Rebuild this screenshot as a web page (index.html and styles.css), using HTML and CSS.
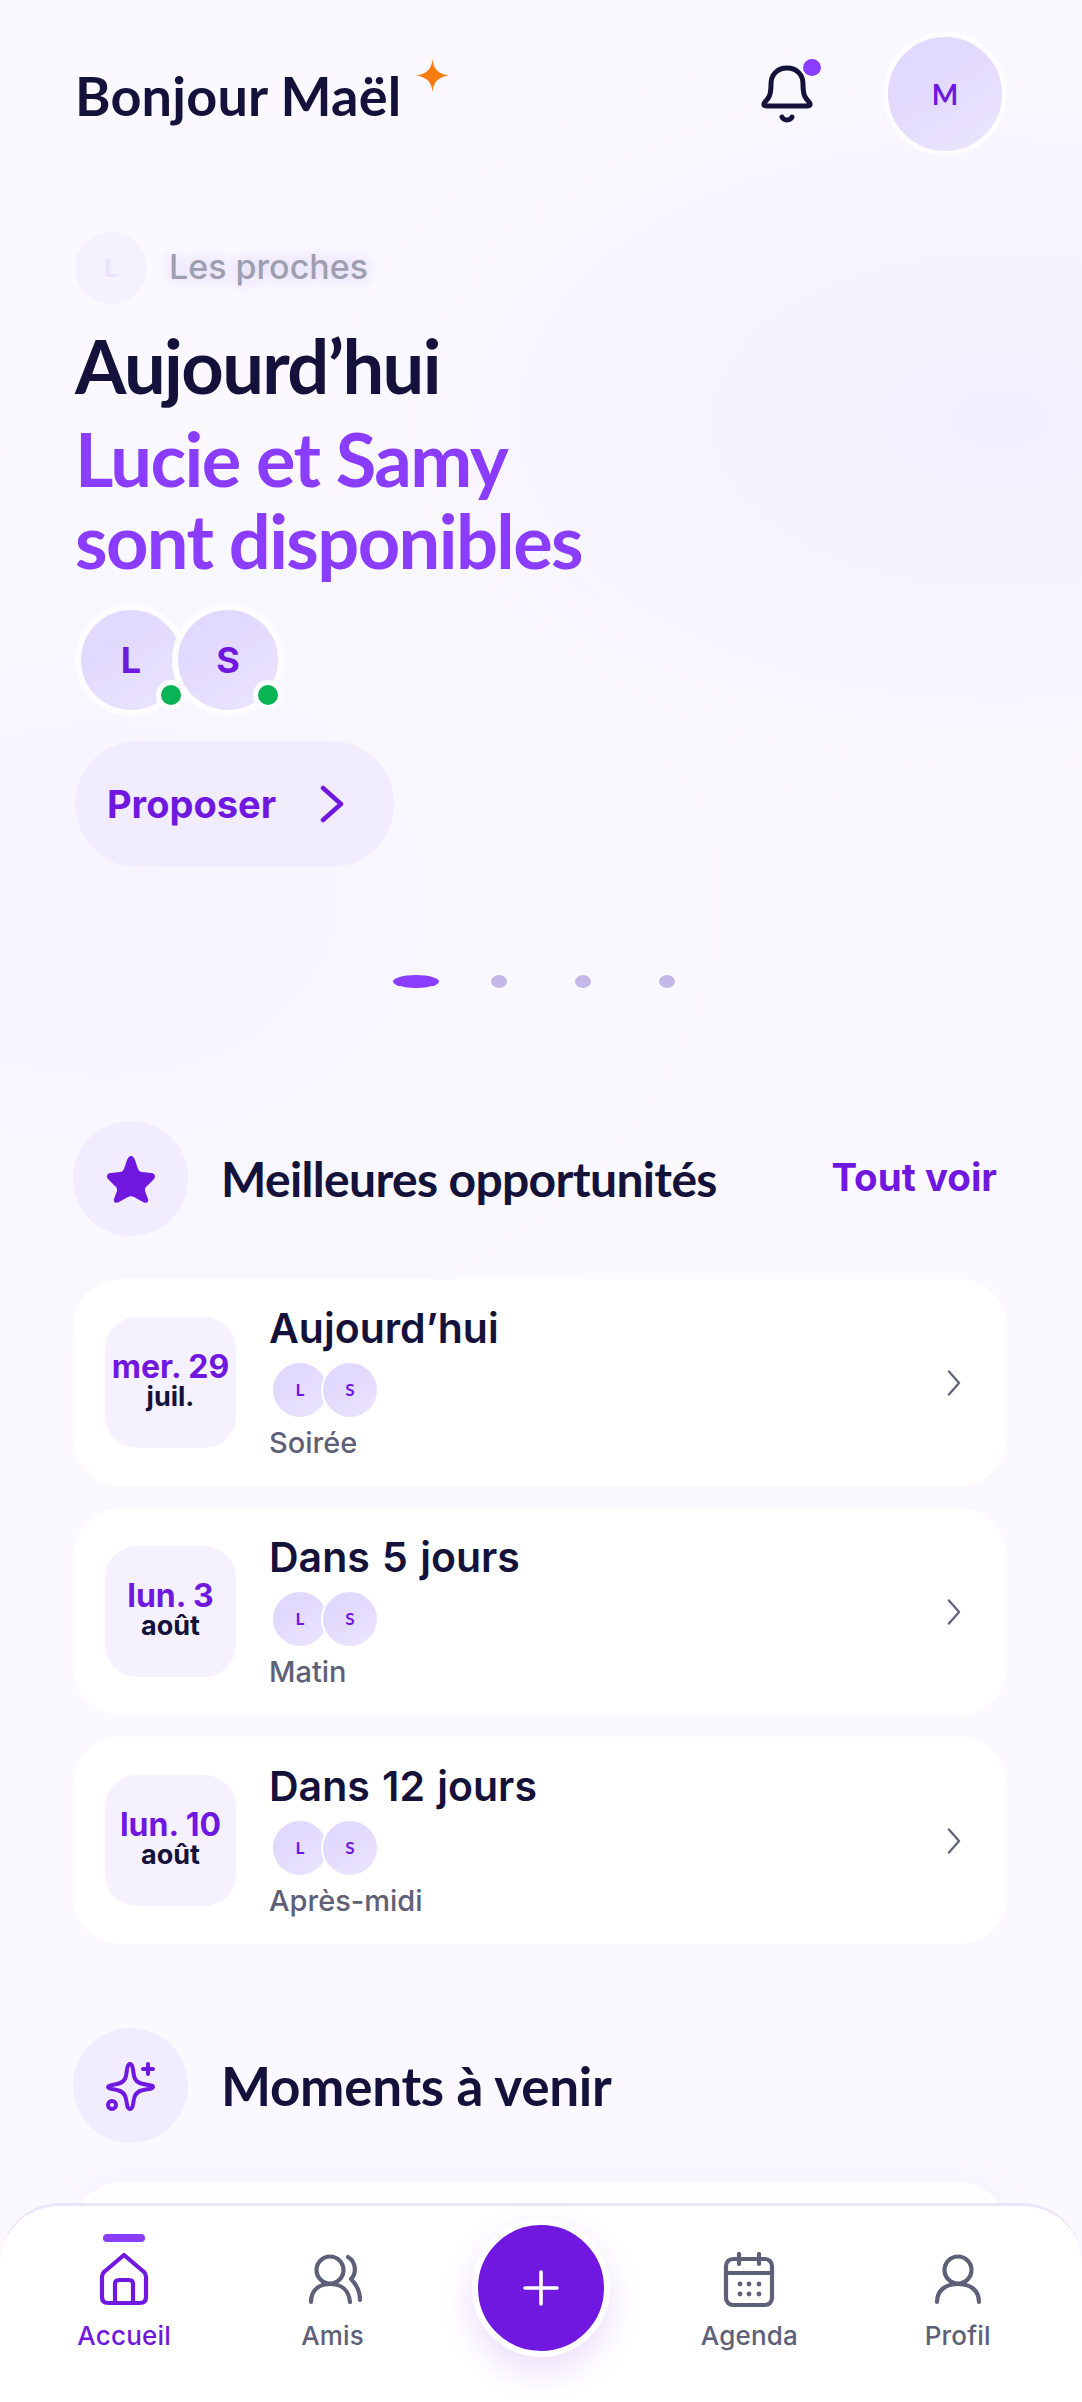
FILE: index.html
```html
<!DOCTYPE html>
<html lang="fr">

<head>
    <meta charset="utf-8">
    <title>Accueil</title>
    <link rel="stylesheet" href="styles.css">
</head>

<body>
    <div class="page">
        <header class="topbar">
            <h1 class="hello">Bonjour Maël</h1>
            <svg class="spark" viewBox="0 0 34 34"><path d="M17 0 C18 10 22 15 34 17 C22 19 18 24 17 34 C16 24 12 19 0 17 C12 15 16 10 17 0Z" fill="#f97c0f"/></svg>
            <div class="bell">
                <svg viewBox="0 0 52 58" fill="none" stroke="#14123a" stroke-width="5" stroke-linecap="round" stroke-linejoin="round">
                    <path d="M26 3 C16 3 10 10 10 19 C10 30 8 33 4 37 C2 40 3 41 6 41 H46 C49 41 50 40 48 37 C44 33 42 30 42 19 C42 10 36 3 26 3Z"/>
                    <path d="M21 52 C23 56 29 56 31 52"/>
                </svg>
                <span class="bell-dot"></span>
            </div>
            <div class="avatar avatar-big">M</div>
        </header>

        <section class="hero">
            <div class="hero-tag">
                <div class="tag-avatar">L</div>
                <span class="tag-text">Les proches</span>
            </div>
            <h2 class="hero-title">Aujourd’hui</h2>
            <p class="hero-sub">Lucie et Samy<br>sont disponibles</p>
            <div class="hero-people">
                <div class="avatar avatar-mid">L<span class="online"></span></div>
                <div class="avatar avatar-mid">S<span class="online"></span></div>
            </div>
            <a class="propose">
                Proposer
                <svg viewBox="0 0 24 38" fill="none" stroke="#7018e0" stroke-width="4.5" stroke-linecap="round" stroke-linejoin="round"><path d="M3 3 L21 19 L3 35"/></svg>
            </a>
            <div class="dots">
                <span class="dot dot-on"></span>
                <span class="dot"></span>
                <span class="dot"></span>
                <span class="dot"></span>
            </div>
        </section>

        <section class="best">
            <div class="sec-head">
                <div class="sec-icon">
                    <svg class="star" viewBox="0 0 50 48"><path d="M25 1 C27 1 28 3 29 5 L32 14 C33 16 34 17 36 17 L45 18 C49 18 50 22 48 24 L41 31 C39 32 39 34 39 36 L42 44 C43 47 40 49 37 47 L28 42 C26 41 24 41 22 42 L13 47 C10 49 7 47 8 44 L11 36 C11 34 11 32 9 31 L2 24 C0 22 1 18 5 18 L14 17 C16 17 17 16 18 14 L21 5 C22 3 23 1 25 1Z" fill="#7018e0"/></svg>
                </div>
                <h3 class="sec-title">Meilleures opportunités</h3>
                <a class="see-all">Tout voir</a>
            </div>

            <div class="cards">
                <div class="card">
                    <div class="date"><b>mer. 29</b><span>juil.</span></div>
                    <div class="card-body">
                        <h4>Aujourd’hui</h4>
                        <div class="minis"><div class="avatar avatar-mini">L</div><div class="avatar avatar-mini">S</div></div>
                        <p>Soirée</p>
                    </div>
                    <svg class="chev" viewBox="0 0 18 36" fill="none" stroke="#62647c" stroke-width="3.2" stroke-linecap="round" stroke-linejoin="round"><path d="M2 2 L16 18 L2 34"/></svg>
                </div>
                <div class="card">
                    <div class="date"><b>lun. 3</b><span>août</span></div>
                    <div class="card-body">
                        <h4>Dans 5 jours</h4>
                        <div class="minis"><div class="avatar avatar-mini">L</div><div class="avatar avatar-mini">S</div></div>
                        <p>Matin</p>
                    </div>
                    <svg class="chev" viewBox="0 0 18 36" fill="none" stroke="#62647c" stroke-width="3.2" stroke-linecap="round" stroke-linejoin="round"><path d="M2 2 L16 18 L2 34"/></svg>
                </div>
                <div class="card">
                    <div class="date"><b>lun. 10</b><span>août</span></div>
                    <div class="card-body">
                        <h4>Dans 12 jours</h4>
                        <div class="minis"><div class="avatar avatar-mini">L</div><div class="avatar avatar-mini">S</div></div>
                        <p>Après-midi</p>
                    </div>
                    <svg class="chev" viewBox="0 0 18 36" fill="none" stroke="#62647c" stroke-width="3.2" stroke-linecap="round" stroke-linejoin="round"><path d="M2 2 L16 18 L2 34"/></svg>
                </div>
            </div>
        </section>

        <section class="moments">
            <div class="sec-head">
                <div class="sec-icon">
                    <svg class="sparkle" viewBox="0 0 50 50" fill="none" stroke="#7018e0" stroke-width="4" stroke-linecap="round" stroke-linejoin="round">
                        <path d="M24 3 C27 3 27 10 28 15 C29 20 32 22 37 23 C41 24 47 24 47 26 C47 28 41 28 37 29 C32 30 29 33 28 38 C27 42 27 48 24 48 C21 48 21 42 20 38 C19 33 16 30 11 29 C7 28 2 28 2 26 C2 24 7 24 11 23 C16 22 19 20 20 15 C21 10 21 3 24 3Z"/>
                        <path d="M42 3 V13 M37 8 H47"/>
                        <circle cx="6" cy="44" r="4"/>
                    </svg>
                </div>
                <h3 class="sec-title sec-title-big">Moments à venir</h3>
            </div>
            <div class="peek"></div>
        </section>

        <nav class="tabbar">
            <a class="tab tab-on">
                <span class="tab-mark"></span>
                <svg class="tab-icon" viewBox="0 0 60 56" fill="none" stroke="#7018e0" stroke-width="4.2" stroke-linecap="round" stroke-linejoin="round">
                    <path d="M30 3 L10 20 Q8 22 8 25 V45 Q8 51 14 51 H46 Q52 51 52 45 V25 Q52 22 50 20 Z"/>
                    <path d="M21 51 V32 Q21 28 25 28 H35 Q39 28 39 32 V51"/>
                </svg>
                Accueil
            </a>
            <a class="tab">
                <span class="tab-mark"></span>
                <svg class="tab-icon" viewBox="0 0 60 56" fill="none" stroke="#5e6078" stroke-width="4.2" stroke-linecap="round" stroke-linejoin="round">
                    <circle cx="27" cy="18" r="13.5"/>
                    <path d="M8 50 C8 38 16 32 27 32 C38 32 46 38 47 50"/>
                    <path d="M45 5 C53 10 54 21 48 27 C54 33 57 39 57 48"/>
                </svg>
                Amis
            </a>
            <div class="tab-mid">
                <a class="fab">
                    <svg viewBox="0 0 36 36" fill="none" stroke="#fff" stroke-width="3.6" stroke-linecap="round"><path d="M18 2 V34 M2 18 H34"/></svg>
                </a>
            </div>
            <a class="tab">
                <span class="tab-mark"></span>
                <svg class="tab-icon" viewBox="0 0 60 56" fill="none" stroke="#5e6078" stroke-width="4.2" stroke-linecap="round" stroke-linejoin="round">
                    <rect x="7" y="7" width="46" height="46" rx="7"/>
                    <path d="M7 21 H53 M20 2 V12 M40 2 V12"/>
                    <g fill="#5e6078" stroke="none">
                        <circle cx="21" cy="32" r="2.4"/><circle cx="30" cy="32" r="2.4"/><circle cx="40" cy="32" r="2.4"/>
                        <circle cx="21" cy="42" r="2.4"/><circle cx="30" cy="42" r="2.4"/><circle cx="40" cy="42" r="2.4"/>
                    </g>
                </svg>
                Agenda
            </a>
            <a class="tab">
                <span class="tab-mark"></span>
                <svg class="tab-icon" viewBox="0 0 60 56" fill="none" stroke="#5e6078" stroke-width="4.2" stroke-linecap="round" stroke-linejoin="round">
                    <circle cx="30" cy="18" r="13.5"/>
                    <path d="M9 50 C9 38 18 32 30 32 C42 32 51 38 51 50"/>
                </svg>
                Profil
            </a>
        </nav>
    </div>
</body>

</html>
```

FILE: styles.css
```css
* {
    box-sizing: border-box;
}

html,
body {
    margin: 0;
    padding: 0;
}

.page {
    position: relative;
    width: 1082px;
    height: 2402px;
    overflow: hidden;
    font-family: "Inter", "Liberation Sans", sans-serif;
    color: #14123a;
    background-color: #fbf9ff;
    background-image:
        radial-gradient(ellipse 720px 420px at 1000px 420px, #f3efff 0%, rgba(243, 239, 255, 0) 100%),
        radial-gradient(ellipse 700px 520px at 100px 900px, #f6f5ff 0%, rgba(246, 245, 255, 0) 100%);
}

h1,
h2,
h3,
h4,
p {
    margin: 0;
}

/* top */
.topbar {
    display: flex;
    align-items: center;
    height: 124px;
    margin-top: 32px;
    padding: 0 75px;
}

.hello {
    font-family: "Lato", sans-serif;
    font-size: 54px;
    font-weight: 700;
    letter-spacing: 0.2px;
    margin-top: 2px;
}

.spark {
    width: 33px;
    height: 33px;
    margin: -38px 0 0 15px;
}

.bell {
    position: relative;
    width: 52px;
    height: 58px;
    margin-left: auto;
    margin-right: 70px;
}

.bell svg {
    display: block;
    width: 52px;
    height: 58px;
}

.bell-dot {
    position: absolute;
    top: -6px;
    right: -8px;
    width: 18px;
    height: 17px;
    border-radius: 50%;
    background: #8b3dff;
}

.avatar {
    position: relative;
    display: flex;
    align-items: center;
    justify-content: center;
    flex-shrink: 0;
    border-radius: 50%;
    color: #7018e0;
    font-weight: 700;
    background: linear-gradient(145deg, #e2d9ff 35%, #ece6fd 100%);
}

.avatar-big {
    width: 124px;
    height: 124px;
    border: 5px solid #fdfcff;
    font-family: "Lato", sans-serif;
    font-size: 28px;
}

/* hero */
.hero {
    padding: 0 75px;
    margin-top: 76px;
}

.hero-tag {
    display: flex;
    align-items: center;
    gap: 22px;
    height: 72px;
}

.tag-avatar {
    display: flex;
    align-items: center;
    justify-content: center;
    width: 72px;
    height: 72px;
    border-radius: 50%;
    background: #f5f2ff;
    color: #e9e3fd;
    font-size: 24px;
    font-weight: 700;
}

.tag-text {
    font-size: 34px;
    font-weight: 500;
    color: #9e9eb1;
    margin-top: -3px;
    text-shadow: 0 0 14px #dcd4f8, 0 0 22px #e3dcfb;
}

.hero-title,
.hero-sub {
    font-family: "Lato", sans-serif;
    font-size: 74px;
    font-weight: 700;
    line-height: 82px;
    letter-spacing: -1.6px;
}

.hero-title {
    margin-top: 21px;
}

.hero-sub {
    margin-top: 11px;
    color: #8b3dff;
}

.hero-people {
    display: flex;
    margin-top: 22px;
}

.avatar-mid {
    width: 112px;
    height: 112px;
    border: 6px solid #fdfcff;
    font-size: 36px;
}

.avatar-mid + .avatar-mid {
    margin-left: -15px;
}

.online {
    position: absolute;
    right: -5px;
    bottom: 0;
    width: 30px;
    height: 30px;
    border: 5px solid #fdfcff;
    border-radius: 50%;
    background: #08b454;
}

.propose {
    display: flex;
    align-items: center;
    justify-content: space-between;
    width: 319px;
    height: 126px;
    margin-top: 25px;
    padding: 0 50px 0 32px;
    border-radius: 63px;
    background: #f1ecfe;
    color: #7018e0;
    font-size: 38px;
    font-weight: 700;
}

.propose svg {
    width: 24px;
    height: 38px;
}

.dots {
    display: flex;
    align-items: center;
    width: 100%;
    margin-top: 108px;
    padding-left: 318px;
}

.dot {
    width: 16px;
    height: 13px;
    margin-left: 68px;
    border-radius: 50%;
    background: #c4b8e8;
}

.dot-on {
    width: 46px;
    height: 13px;
    margin-left: 0;
    margin-right: -16px;
    background: #8b3dff;
}

/* sections */
.best {
    padding: 0 85px 0 73px;
    margin-top: 133px;
}

.sec-head {
    display: flex;
    align-items: center;
}

.sec-icon {
    display: flex;
    align-items: center;
    justify-content: center;
    width: 115px;
    height: 115px;
    border-radius: 50%;
    background: #f1ecfe;
}

.star {
    width: 50px;
    height: 48px;
}

.sparkle {
    width: 50px;
    height: 50px;
}

.sec-title {
    margin-left: 33px;
    font-family: "Lato", sans-serif;
    font-size: 48px;
    font-weight: 700;
    letter-spacing: -0.65px;
}

.sec-title-big {
    font-size: 53px;
    letter-spacing: -0.3px;
}

.see-all {
    margin-left: auto;
    font-size: 38.5px;
    font-weight: 700;
    color: #7018e0;
    margin-top: -4px;
}

.cards {
    display: flex;
    flex-direction: column;
    gap: 22px;
    margin-top: 43px;
}

.card {
    display: flex;
    align-items: center;
    width: 934px;
    height: 207px;
    padding: 0 46px 0 32px;
    border-radius: 48px;
    background: #fff;
}

.date {
    display: flex;
    flex-direction: column;
    align-items: center;
    justify-content: center;
    width: 131px;
    height: 131px;
    padding-bottom: 5px;
    border-radius: 32px;
    background: #f5f1ff;
}

.date b {
    font-size: 32px;
    line-height: 33px;
    font-weight: 700;
    color: #7018e0;
}

.date span {
    font-size: 27px;
    line-height: 28px;
    font-weight: 700;
}

.card-body {
    margin: 5px 0 0 33px;
}

.card-body h4 {
    font-size: 41px;
    line-height: 36px;
    font-weight: 600;
    word-spacing: 2px;
}

.minis {
    display: flex;
    margin: 15px 0 6px 2px;
}

.avatar-mini {
    width: 58px;
    height: 58px;
    font-size: 17px;
    font-family: "Lato", sans-serif;
    border: 2px solid #fff;
}

.avatar-mini + .avatar-mini {
    margin-left: -8px;
}

.card-body p {
    font-size: 29px;
    line-height: 36px;
    font-weight: 500;
    color: #5f6078;
}

.chev {
    width: 14px;
    height: 26px;
    margin-left: auto;
}

.moments {
    padding: 0 75px 0 73px;
    margin-top: 84px;
}

.peek {
    width: 934px;
    height: 220px;
    margin-top: 39px;
    border-radius: 48px;
    background: rgba(255, 255, 255, 0.6);
    box-shadow: 0 -4px 30px rgba(139, 61, 255, 0.05);
}

/* bottom bar */
.tabbar {
    position: absolute;
    left: 0;
    right: 0;
    bottom: 0;
    display: grid;
    grid-template-columns: repeat(5, 1fr);
    height: 199px;
    padding: 28px 20px 0;
    background: rgba(255, 255, 255, 0.97);
    border-top: 3px solid #ebe5fc;
    border-radius: 60px 60px 0 0;
}

.tab {
    display: flex;
    flex-direction: column;
    align-items: center;
    font-size: 26px;
    font-weight: 500;
    line-height: 32px;
    letter-spacing: 0.2px;
    color: #5e6078;
}

.tab-on {
    color: #7018e0;
}

.tab-mark {
    width: 42px;
    height: 8px;
    border-radius: 4px;
}

.tab-on .tab-mark {
    background: #8b3dff;
}

.tab-icon {
    width: 60px;
    height: 56px;
    margin: 10px 0 12px;
}

.tab-mid {
    display: flex;
    justify-content: center;
}

.fab {
    display: flex;
    align-items: center;
    justify-content: center;
    width: 138px;
    height: 138px;
    margin-top: -15px;
    border: 6px solid #fff;
    border-radius: 50%;
    background: #7018e0;
    box-shadow: 0 14px 34px rgba(112, 24, 224, 0.14);
}

.fab svg {
    width: 36px;
    height: 36px;
}
```
